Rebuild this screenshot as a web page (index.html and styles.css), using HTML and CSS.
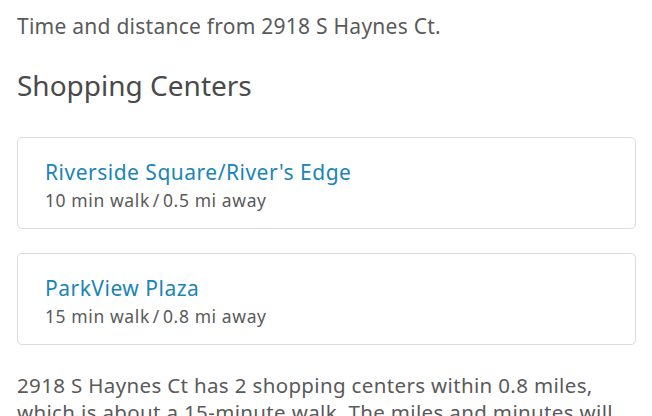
FILE: index.html
```html
<!DOCTYPE html>
<html>
<head>
<meta charset="utf-8">
<link rel="stylesheet" href="styles.css">
</head>
<body>
<div class="page">
  <p class="intro">Time and distance from 2918 S Haynes Ct.</p>
  <h2 class="heading">Shopping Centers</h2>
  <div class="cards">
    <div class="card">
      <div class="name">Riverside Square/River's Edge</div>
      <div class="meta">10 min walk<span class="sep">/</span>0.5 mi away</div>
    </div>
    <div class="card">
      <div class="name">ParkView Plaza</div>
      <div class="meta">15 min walk<span class="sep">/</span>0.8 mi away</div>
    </div>
  </div>
  <p class="summary">2918 S Haynes Ct has 2 shopping centers within 0.8 miles, which is about a 15-minute walk. The miles and minutes will be for the farthest away property.</p>
</div>
</body>
</html>
```

FILE: styles.css
```css
html, body {
  margin: 0;
  padding: 0;
  background: #fff;
}
body {
  font-family: "Noto Sans", "Liberation Sans", sans-serif;
  color: #555;
  overflow: hidden;
  height: 416px;
}
.page {
  padding: 0 17px;
  width: 619px;
}
.intro {
  margin: 0;
  padding-top: 12px;
  font-size: 21px;
  line-height: 28px;
  letter-spacing: 0.25px;
  color: #5a5a5a;
}
.heading {
  margin: 0;
  margin-top: 27px;
  font-size: 28px;
  line-height: 36px;
  font-weight: 400;
  color: #4a4a4a;
}
.cards {
  display: flex;
  flex-direction: column;
  gap: 24px;
  margin-top: 34px;
}
.card {
  border: 1px solid #dcdcdc;
  border-radius: 5px;
  height: 92px;
  box-sizing: border-box;
  padding: 21px 27px 0 27px;
}
.name {
  font-size: 21px;
  line-height: 26px;
  letter-spacing: 0.5px;
  color: #1a84b8;
}
.meta {
  margin-top: 2px;
  font-size: 17.5px;
  line-height: 26px;
  letter-spacing: 0.6px;
  color: #5a5a5a;
}
.sep {
  margin: 0 3px;
}
.summary {
  margin: 0;
  margin-top: 27px;
  font-size: 20.5px;
  line-height: 27px;
  letter-spacing: 0.35px;
  color: #5a5a5a;
}
```
